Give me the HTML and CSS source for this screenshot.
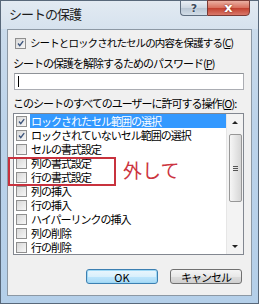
FILE: index.html
```html
<!DOCTYPE html>
<html lang="ja">
<head>
<meta charset="UTF-8">
<title>シートの保護</title>
<link rel="stylesheet" href="styles.css">
</head>
<body>
    <div class="window">
        <div class="titlebar">
            <span class="title">シートの保護</span>
            <div class="capbtns">
                <span class="cap help">?</span>
                <span class="cap close">x</span>
            </div>
        </div>
        <div class="frame">
            <div class="panel">
                <div class="row protect">
                    <span class="box checked"><svg viewBox="0 0 11 11"><path d="M2.5 5.5 L4.6 8.2 L8.8 2.6"/></svg></span>
                    <span class="tight">シートとロックされたセルの内容を保護する(<u>C</u>)</span>
                </div>
                <div class="lbl">シートの保護を解除するためのパスワード(<u>P</u>)</div>
                <div class="pwd"><span class="caret"></span></div>
                <div class="lbl">このシートのすべてのユーザーに許可する操作(<u>O</u>):</div>

                <div class="list">
                    <div class="items">
                        <div class="item"><span class="box checked"><svg viewBox="0 0 11 11"><path d="M2.5 5.5 L4.6 8.2 L8.8 2.6"/></svg></span><span class="txt sel">ロックされたセル範囲の選択</span></div>
                        <div class="item"><span class="box checked"><svg viewBox="0 0 11 11"><path d="M2.5 5.5 L4.6 8.2 L8.8 2.6"/></svg></span><span class="txt">ロックされていないセル範囲の選択</span></div>
                        <div class="item"><span class="box"></span><span class="txt">セルの書式設定</span></div>
                        <div class="item"><span class="box"></span><span class="txt">列の書式設定</span></div>
                        <div class="item"><span class="box"></span><span class="txt">行の書式設定</span></div>
                        <div class="item"><span class="box"></span><span class="txt">列の挿入</span></div>
                        <div class="item"><span class="box"></span><span class="txt">行の挿入</span></div>
                        <div class="item"><span class="box"></span><span class="txt">ハイパーリンクの挿入</span></div>
                        <div class="item"><span class="box"></span><span class="txt">列の削除</span></div>
                        <div class="item"><span class="box"></span><span class="txt">行の削除</span></div>
                    </div>
                    <div class="scroll">
                        <div class="arrow up"></div>
                        <div class="thumb"><span></span><span></span><span></span></div>
                        <div class="arrow down"></div>
                    </div>
                </div>

                <div class="buttons">
                    <button class="btn default">OK</button>
                    <button class="btn">キャンセル</button>
                </div>
            </div>
        </div>

        <div class="mark"></div>
        <div class="note">外して</div>
    </div>
</body>
</html>
```

FILE: styles.css
```css
body {
    margin: 0;
    padding: 0;
    font-family: "Noto Sans CJK JP", "Noto Sans", sans-serif;
    font-size: 11px;
    letter-spacing: -1px;
    color: #000;
}

.window {
    position: relative;
    width: 257px;
    height: 302px;
    border: 1px solid #58687a;
    background: linear-gradient(to bottom, #cfdeec, #bcd3ea 40%, #b4cfe9);
}

.titlebar {
    height: 28px;
    display: flex;
    justify-content: space-between;
    align-items: flex-start;
    background: linear-gradient(to bottom, #e2eaf2, #d6e2ee);
}

.title {
    font-size: 13px;
    line-height: 14px;
    padding: 6px 0 0 8px;
    color: #1c1c1c;
}

.capbtns {
    display: flex;
    margin-top: -1px;
    margin-right: 8px;
}

.cap {
    height: 16px;
    line-height: 15px;
    text-align: center;
    color: #fff;
    font-family: "DejaVu Sans", sans-serif;
    font-weight: bold;
    letter-spacing: 0;
    box-sizing: border-box;
    border: 1px solid #5f6e80;
}

.help {
    width: 27px;
    font-size: 11px;
    color: #3c4a5c;
    text-shadow: 0 0 2px #fff;
    border-radius: 0 0 0 4px;
    border-right: none;
    background: linear-gradient(to bottom, #e9eff5, #cdd7e2 50%, #b8c5d3 51%, #d2dde8);
}

.close {
    width: 43px;
    font-size: 13px;
    line-height: 13px;
    text-shadow: 0 0 2px #6a1a10;
    border-color: #7a3a34;
    border-radius: 0 0 4px 0;
    background: linear-gradient(to bottom, #eab0a2, #d86e5c 50%, #c2402e 51%, #d9786a);
}

.frame {
    padding: 0 6px 7px 6px;
}

.panel {
    height: 265px;
    border: 1px solid #8c98a4;
    background: #f0f0f0;
}

.row {
    display: flex;
    align-items: center;
    height: 14px;
    line-height: 14px;
}

.protect {
    margin-top: 6px;
    padding-left: 7px;
}

.protect .box {
    margin-right: 4px;
}

.tight {
    font-size: 10.5px;
    letter-spacing: -0.9px;
    white-space: nowrap;
}

.box {
    display: inline-block;
    flex: none;
    width: 11px;
    height: 11px;
    box-sizing: border-box;
    border: 1px solid #8f8f8f;
    background: linear-gradient(135deg, #d8d8d8, #f7f7f7);
}

.box svg {
    display: block;
    width: 9px;
    height: 9px;
}

.box path {
    fill: none;
    stroke: #3d557c;
    stroke-width: 1.7;
}

.lbl {
    height: 14px;
    line-height: 14px;
    margin-top: 6px;
    padding-left: 5px;
    white-space: nowrap;
}

.pwd {
    width: 230px;
    height: 17px;
    margin: 3px 0 0 6px;
    box-sizing: border-box;
    border: 1px solid #abadb3;
    border-top-color: #8e9297;
    background: #fff;
    padding: 2px 0 0 3px;
}

.caret {
    display: block;
    width: 1px;
    height: 11px;
    background: #000;
}

.list {
    display: flex;
    width: 231px;
    height: 142px;
    margin: 3px 0 0 5px;
    box-sizing: border-box;
    border: 1px solid #828790;
    background: #fff;
}

.items {
    flex: 1;
}

.item {
    display: flex;
    align-items: center;
    height: 14px;
    padding-left: 2px;
}

.item .box {
    margin-right: 3px;
}

.txt {
    flex: 1;
    height: 14px;
    line-height: 14px;
    padding-left: 1px;
    white-space: nowrap;
}

.txt.sel {
    background: #3399ff;
    color: #fff;
}

.scroll {
    width: 16px;
    display: flex;
    flex-direction: column;
    align-items: center;
    background: #f3f3f3;
    border-left: 1px solid #e6e6e6;
}

.arrow {
    width: 16px;
    height: 16px;
    display: flex;
    align-items: center;
    justify-content: center;
}

.arrow::after {
    content: "";
    border-left: 3px solid transparent;
    border-right: 3px solid transparent;
}

.up::after {
    border-bottom: 3px solid #222;
}

.down {
    margin-top: auto;
}

.down::after {
    border-top: 3px solid #222;
}

.thumb {
    width: 13px;
    height: 68px;
    margin-top: 4px;
    box-sizing: border-box;
    border: 1px solid #979797;
    border-radius: 2px;
    background: linear-gradient(to right, #f6f6f6, #e6e6e6 50%, #d6d6d6);
    display: flex;
    flex-direction: column;
    justify-content: center;
    align-items: center;
    gap: 1px;
}

.thumb span {
    display: block;
    width: 5px;
    height: 1px;
    background: #555;
}

.buttons {
    display: flex;
    justify-content: flex-end;
    gap: 12px;
    margin-top: 14px;
    padding-right: 9px;
}

.btn {
    width: 72px;
    height: 15px;
    padding: 0;
    font-family: "Noto Sans CJK JP", "Noto Sans", sans-serif;
    font-size: 11px;
    line-height: 12px;
    letter-spacing: -1px;
    color: #000;
    border: 1px solid #707070;
    border-radius: 3px;
    background: linear-gradient(to bottom, #f4f4f4, #e8e8e8 50%, #dcdcdc 51%, #cfcfcf);
}

.btn.default {
    border-color: #3c7fb1;
    letter-spacing: 0;
    box-shadow: inset 0 0 0 1px #9ed8f5;
    background: linear-gradient(to bottom, #eaf6fd, #d9f0fc 50%, #bee6fd 51%, #a7d9f5);
}

.mark {
    position: absolute;
    left: 7px;
    top: 156px;
    width: 104px;
    height: 25px;
    border: 2px solid #c8323e;
}

.note {
    position: absolute;
    left: 122px;
    top: 157px;
    font-size: 19px;
    line-height: 24px;
    letter-spacing: 0;
    color: #cc3440;
}
```
